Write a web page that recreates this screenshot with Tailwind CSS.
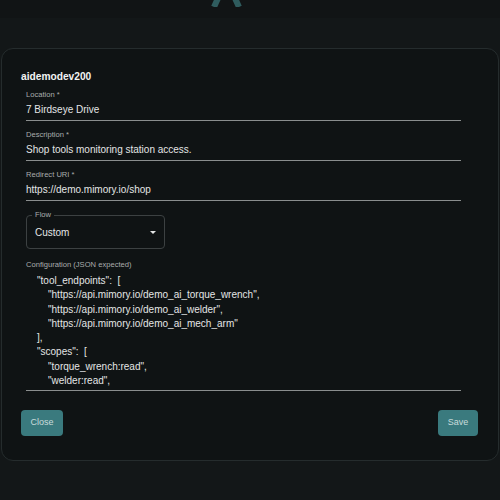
<!DOCTYPE html>
<html lang="en">
<head>
    <meta charset="UTF-8">
    <title>aidemodev200</title>
    <script src="https://cdn.jsdelivr.net/npm/@tailwindcss/browser@4"></script>
</head>
<body class="bg-[#131718] w-[500px] h-[500px] overflow-hidden font-['Liberation_Sans',sans-serif] antialiased text-[#e4e6e6]">
    <!-- dimmed app header behind the dialog -->
    <header class="h-[18px] bg-[#111415] overflow-hidden flex pl-[211px] gap-[10px]">
        <svg class="w-[31px] h-[7px]" viewBox="0 0 31 7"><path d="M8 -4 L3 7 M23 -4 L28 7" stroke="#2f5c5e" stroke-width="6" fill="none"/></svg>
        <span class="text-[10px] leading-[10px] mt-[-8px] text-[#6f7475]">Direct</span>
    </header>

    <div class="mt-[30px] mx-[1px] h-[413px] rounded-[12px] border border-[#252c2d] bg-[#0f1314] pl-[19px] pr-[20px] flex flex-col">
        <h2 class="mt-[21px] text-[10.2px] leading-[14px] font-bold text-[#f2f3f3]">aidemodev200</h2>

        <div class="ml-[5px] mr-[17px] mt-[5px] flex flex-col">
            <label class="text-[7.6px] leading-[11px] text-[#a9adad]">Location *</label>
            <div class="text-[10px] leading-[15px] mt-[2px] pb-[3px] border-b border-[#8a8e8e]">7 Birdseye Drive</div>

            <label class="text-[7.6px] leading-[11px] text-[#a9adad] mt-[8px]">Description *</label>
            <div class="text-[10px] leading-[15px] mt-[2px] pb-[3px] border-b border-[#8a8e8e]">Shop tools monitoring station access.</div>

            <label class="text-[7.6px] leading-[11px] text-[#a9adad] mt-[8px]">Redirect URI *</label>
            <div class="text-[10px] leading-[15px] mt-[2px] pb-[3px] border-b border-[#8a8e8e]">https://demo.mimory.io/shop</div>

            <div class="relative mt-[14px] w-[139px] h-[34px] rounded-[4px] border border-[#3c4142] flex items-center justify-between pl-[8px] pr-[8px]">
                <span class="absolute left-[5px] top-[-6px] bg-[#0f1314] px-[3px] text-[7.6px] leading-[10px] text-[#a9adad]">Flow</span>
                <span class="text-[10px]">Custom</span>
                <span class="w-0 h-0 border-x-[3.5px] border-x-transparent border-t-[3.5px] border-t-[#e4e6e6]"></span>
            </div>

            <label class="text-[7.6px] leading-[11px] text-[#a9adad] mt-[10px]">Configuration (JSON expected)</label>
            <div class="mt-[3px] h-[118px] overflow-hidden border-b border-[#8a8e8e] text-[10px] leading-[14.3px] pt-[1px] pl-[11px]">
                <div>"tool_endpoints":&nbsp; [</div>
                <div class="pl-[11px]">"https://api.mimory.io/demo_ai_torque_wrench",</div>
                <div class="pl-[11px]">"https://api.mimory.io/demo_ai_welder",</div>
                <div class="pl-[11px]">"https://api.mimory.io/demo_ai_mech_arm"</div>
                <div>],</div>
                <div>"scopes":&nbsp; [</div>
                <div class="pl-[11px]">"torque_wrench:read",</div>
                <div class="pl-[11px]">"welder:read",</div>
            </div>
        </div>

        <div class="mt-[19px] flex justify-between">
            <button class="w-[42px] h-[26px] rounded-[4px] bg-[#3a7a7e] text-[9px] text-[#c9dcdc]">Close</button>
            <button class="w-[40px] h-[26px] rounded-[4px] bg-[#3a7a7e] text-[9px] text-[#c9dcdc]">Save</button>
        </div>
    </div>
</body>
</html>
